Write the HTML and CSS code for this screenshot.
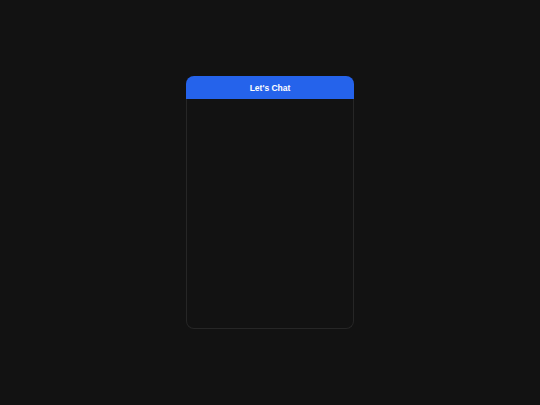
FILE: index.html
```html
<!DOCTYPE html>
<html>
<head>
<meta charset="utf-8">
<link rel="stylesheet" href="styles.css">
</head>
<body>
<div class="page">
  <div class="chat">
    <div class="chat-header">Let's Chat</div>
    <div class="chat-body"></div>
  </div>
</div>
</body>
</html>
```
FILE: styles.css
```css
html, body {
  margin: 0;
  padding: 0;
  background: #121212;
  height: 100%;
}
.page {
  height: 100%;
  display: flex;
  align-items: center;
  justify-content: center;
}
.chat {
  width: 168px;
  height: 253px;
  display: flex;
  flex-direction: column;
}
.chat-header {
  height: 23px;
  background: #2563eb;
  color: #ffffff;
  border-radius: 8px 8px 0 0;
  font-family: "Liberation Sans", Arial, sans-serif;
  font-weight: bold;
  font-size: 8.5px;
  display: flex;
  align-items: center;
  justify-content: center;
  flex-shrink: 0;
}
.chat-body {
  flex: 1;
  border: 1px solid #262626;
  border-top: none;
  border-radius: 0 0 8px 8px;
  background: #121212;
}
```
